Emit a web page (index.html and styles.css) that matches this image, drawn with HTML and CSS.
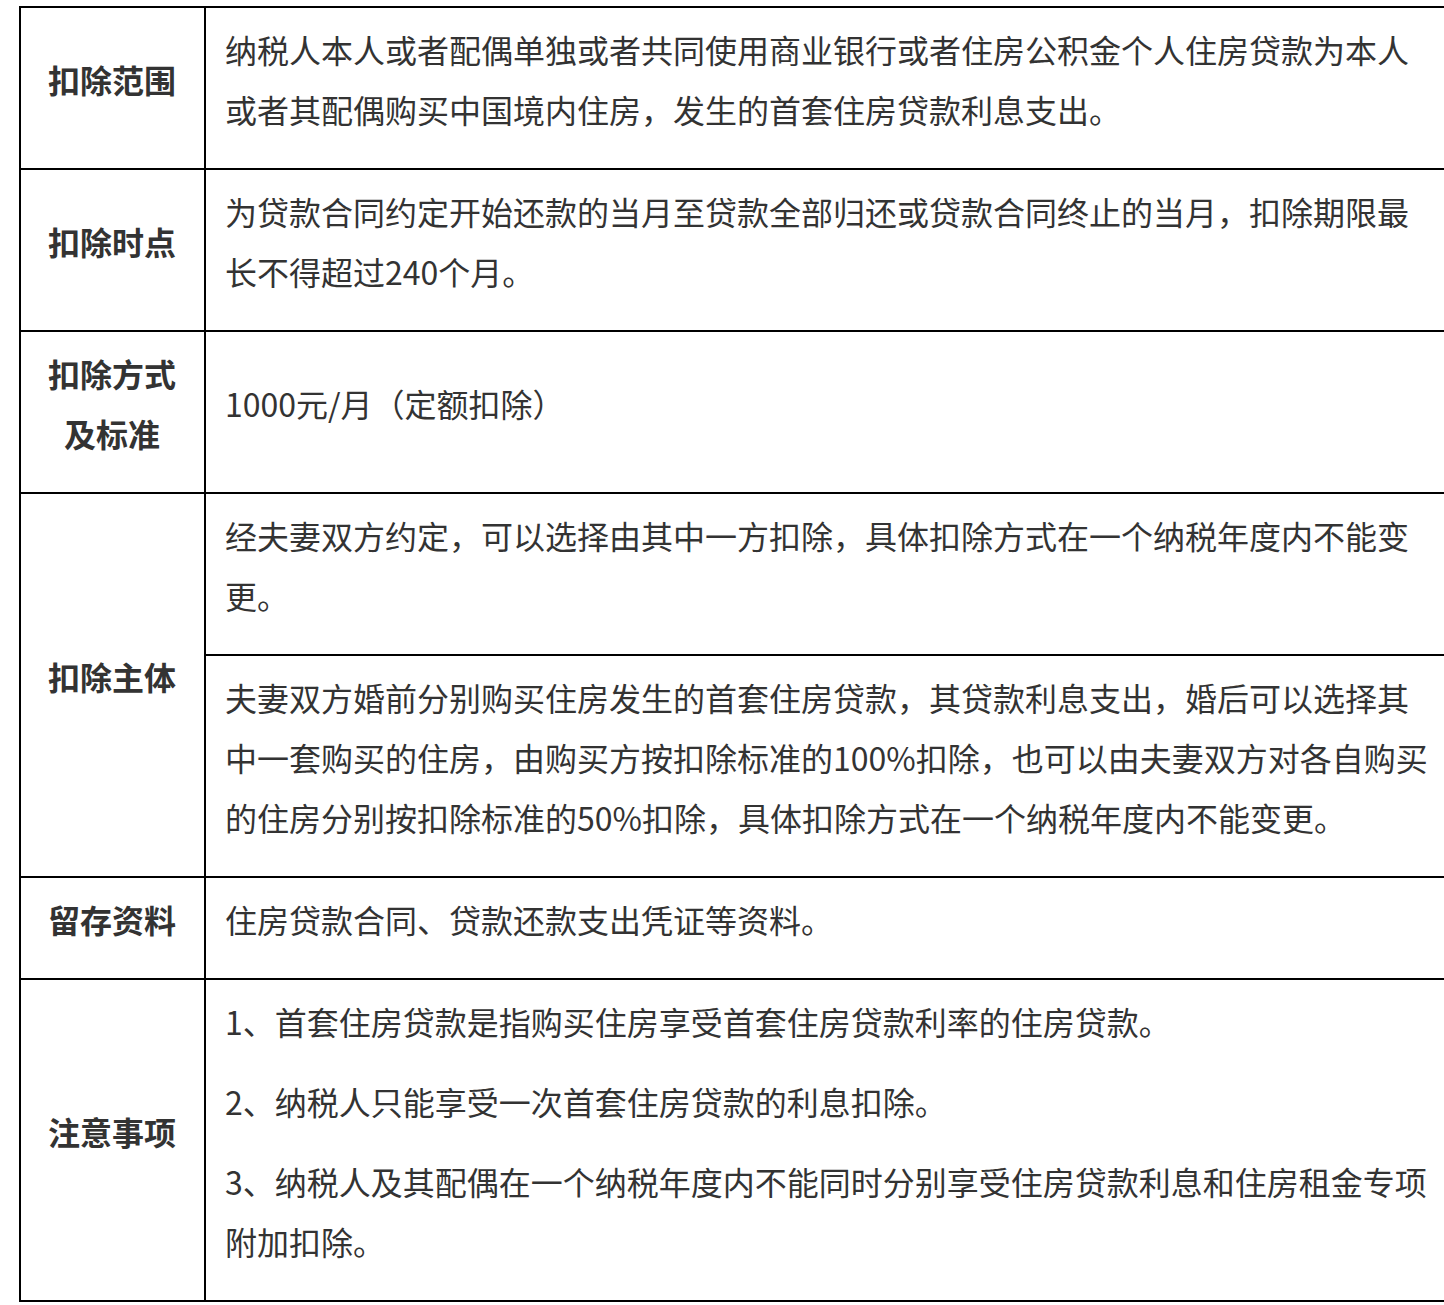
FILE: index.html
```html
<!DOCTYPE html>
<html lang="zh-CN">
<head>
<meta charset="utf-8">
<title>住房贷款利息专项附加扣除</title>
<link rel="stylesheet" href="styles.css">
</head>
<body>
<table class="info">
  <colgroup>
    <col class="col-label">
    <col class="col-body">
  </colgroup>
  <tbody>
    <tr>
      <th class="label"><p>扣除范围</p></th>
      <td class="body"><p>纳税人本人或者配偶单独或者共同使用商业银行或者住房公积金个人住房贷款为本人或者其配偶购买中国境内住房，发生的首套住房贷款利息支出。</p></td>
    </tr>
    <tr>
      <th class="label"><p>扣除时点</p></th>
      <td class="body"><p>为贷款合同约定开始还款的当月至贷款全部归还或贷款合同终止的当月，扣除期限最长不得超过240个月。</p></td>
    </tr>
    <tr>
      <th class="label"><p>扣除方式<br>及标准</p></th>
      <td class="body"><p>1000元/月（定额扣除）</p></td>
    </tr>
    <tr>
      <th class="label" rowspan="2"><p>扣除主体</p></th>
      <td class="body"><p>经夫妻双方约定，可以选择由其中一方扣除，具体扣除方式在一个纳税年度内不能变更。</p></td>
    </tr>
    <tr>
      <td class="body"><p>夫妻双方婚前分别购买住房发生的首套住房贷款，其贷款利息支出，婚后可以选择其中一套购买的住房，由购买方按扣除标准的100%扣除，也可以由夫妻双方对各自购买的住房分别按扣除标准的50%扣除，具体扣除方式在一个纳税年度内不能变更。</p></td>
    </tr>
    <tr>
      <th class="label"><p>留存资料</p></th>
      <td class="body"><p>住房贷款合同、贷款还款支出凭证等资料。</p></td>
    </tr>
    <tr>
      <th class="label"><p>注意事项</p></th>
      <td class="body">
        <p>1、首套住房贷款是指购买住房享受首套住房贷款利率的住房贷款。</p>
        <p>2、纳税人只能享受一次首套住房贷款的利息扣除。</p>
        <p>3、纳税人及其配偶在一个纳税年度内不能同时分别享受住房贷款利息和住房租金专项附加扣除。</p>
      </td>
    </tr>
  </tbody>
</table>
</body>
</html>
```

FILE: styles.css
```css
html {
  overflow-x: hidden;
}

body {
  margin: 0;
  background: #ffffff;
  color: #333333;
  font-family: "Noto Sans CJK SC", "Noto Sans", sans-serif;
  font-size: 32px;
  line-height: 60px;
}

.info {
  border-collapse: collapse;
  table-layout: fixed;
  width: 1436px;
  margin: 6px 0 0 19px;
}

.col-label {
  width: 185px;
}

.col-body {
  width: 1251px;
}

.info th,
.info td {
  border: 2px solid #000000;
  vertical-align: middle;
  padding: 11px 20px 9px 19px;
}

.info p {
  margin: 0 0 20px 0;
}

.label {
  text-align: center;
  font-weight: 700;
  padding-left: 0;
  padding-right: 0;
}

.body {
  text-align: left;
  font-weight: 400;
}
```
